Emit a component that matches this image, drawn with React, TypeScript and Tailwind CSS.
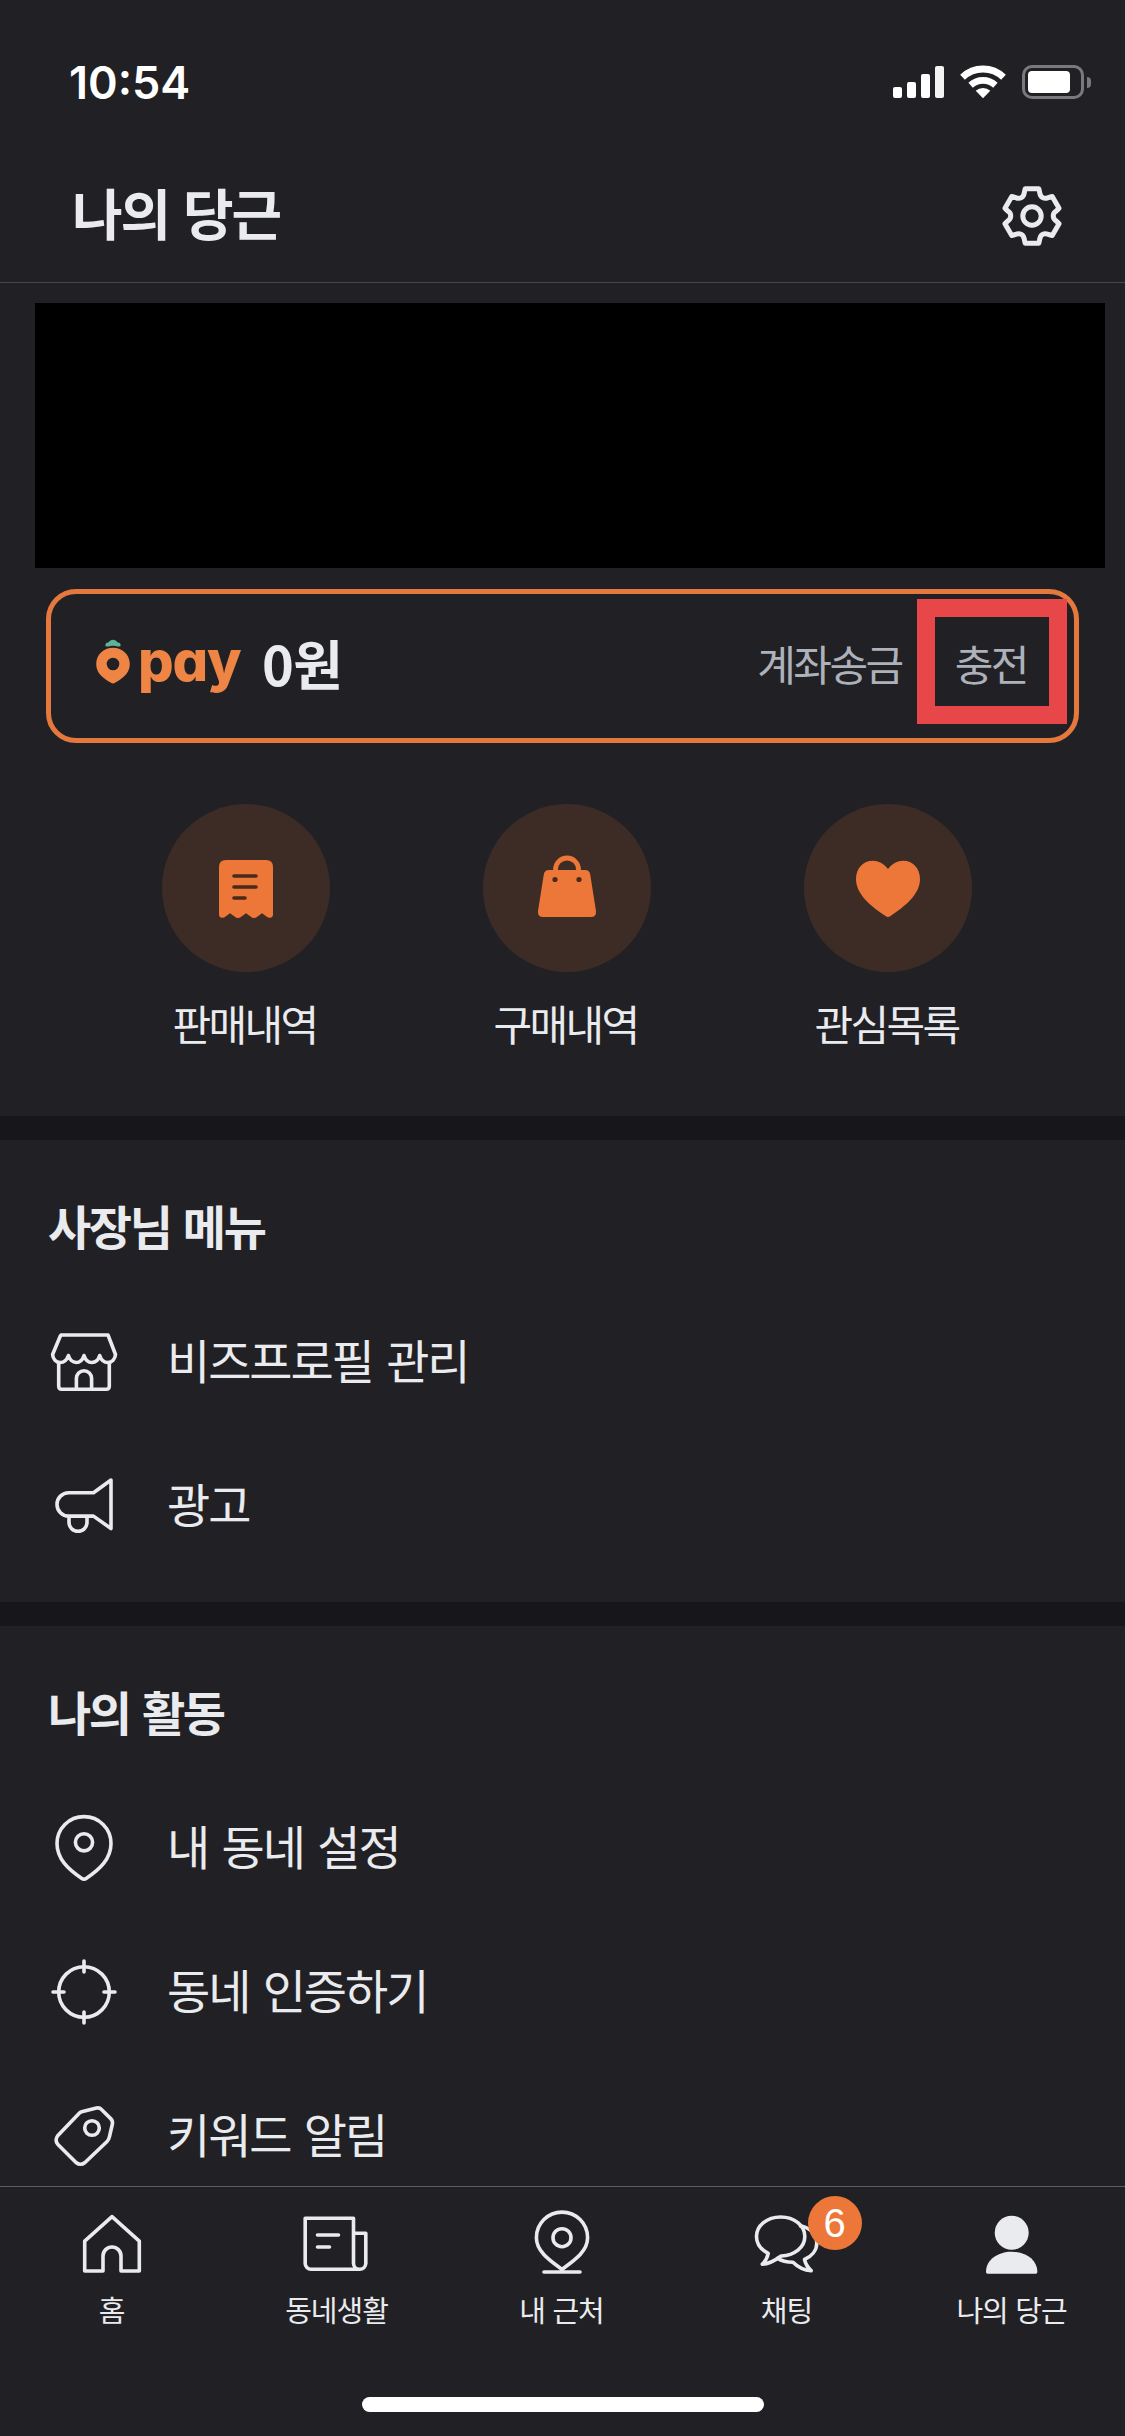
import type { ReactNode } from "react";

const GEAR_SECTOR = [
  [-9.6, -19, -8.2, -20.4, -7.9, -22.6],
  [-7.9, -22.6, -7.2, -26, -6.8, -27.3],
  [-6.8, -27.3, 6.8, -27.3, 6.8, -27.3],
  [6.8, -27.3, 7.2, -26, 7.9, -22.6],
  [8.2, -20.4, 9.6, -19, 10.65, -18.4],
];

function gearPath() {
  let d = "M-10.65 -18.4";
  for (let i = 0; i < 6; i++) {
    const a = (i * Math.PI) / 3;
    for (const seg of GEAR_SECTOR) {
      const pts: string[] = [];
      for (let k = 0; k < 6; k += 2) {
        const x = seg[k] * Math.cos(a) - seg[k + 1] * Math.sin(a);
        const y = seg[k] * Math.sin(a) + seg[k + 1] * Math.cos(a);
        pts.push(`${x.toFixed(2)} ${y.toFixed(2)}`);
      }
      d += ` C${pts.join(" ")}`;
    }
  }
  return d + "Z";
}

function Icon({ children, width = 3.6 }: { children: ReactNode; width?: number }) {
  return (
    <svg
      viewBox="0 0 72 72"
      className="size-[72px] shrink-0 overflow-visible"
      fill="none"
      stroke="#eaebee"
      strokeWidth={width}
      strokeLinecap="round"
      strokeLinejoin="round"
    >
      {children}
    </svg>
  );
}

function StatusBar() {
  return (
    <div className="flex h-[132px] items-start justify-between pt-[65px] pr-[34px] pl-[69px]">
      <span className="font-['Inter'] text-[45px] leading-[35px] font-semibold text-white">10:54</span>
      <div className="flex items-start">
        <div className="flex h-[33px] items-end gap-[5px]">
          <i className="h-[11px] w-[9px] rounded-[2px] bg-white" />
          <i className="h-[16px] w-[9px] rounded-[2px] bg-white" />
          <i className="h-[24px] w-[9px] rounded-[2px] bg-white" />
          <i className="h-[32px] w-[9px] rounded-[2px] bg-white/95" />
        </div>
        <svg viewBox="0 0 46 34" className="ml-[16px] h-[34px] w-[46px]" fill="none" stroke="#fff">
          <path d="M2.5 12.3A29.5 29.5 0 0 1 43.5 12.3" strokeWidth="6.8" />
          <path d="M10.6 20.2A18.4 18.4 0 0 1 35.4 20.2" strokeWidth="6.6" />
          <path d="M15.7 25.7A11 11 0 0 1 30.3 25.7L23 33.2Z" fill="#fff" stroke="none" />
        </svg>
        <div className="ml-[16px] flex items-center">
          <div className="h-[34px] w-[62px] rounded-[10px] border-[3px] border-[#7a7a7e] p-[3px]">
            <div className="h-[22px] w-[42px] rounded-[4px] bg-white" />
          </div>
          <div className="ml-[3px] h-[11px] w-[4px] rounded-r-full bg-[#7a7a7e]" />
        </div>
      </div>
    </div>
  );
}

function Header() {
  return (
    <header className="flex h-[151px] items-center justify-between border-b border-[#46464b] pr-[57px] pb-[1px] pl-[72px]">
      <h1 className="mt-[9px] text-[55px] leading-[72px] font-bold tracking-[-2.2px] [word-spacing:4px]">나의 당근</h1>
      <div className="mt-[18px]">
        <Icon width={5}>
          <g transform="translate(36 36)">
            <path d={gearPath()} />
            <circle r="9.2" />
          </g>
        </Icon>
      </div>
    </header>
  );
}

function PayCard() {
  return (
    <div className="relative mt-[21px] mr-[46px] ml-[46px] flex h-[154px] items-center rounded-[30px] border-[5px] border-[#e5783d] pr-[47px] pb-[6px] pl-[45px]">
      <svg viewBox="0 0 34 46" className="mb-[2px] h-[46px] w-[34px] shrink-0" fill="none">
        <path
          d="M9.500 7.200V5.300Q9.700 3.600 12 3.400Q13 3.200 13.500 2.200Q14.500 .7 17 .7T20.500 2.200Q21 3.200 22 3.400Q24.300 3.600 24.500 5.300V7.200Q21 7.800 19.500 7.100Q17 6.500 14.500 7.100Q13 7.800 9.500 7.200Z"
          fill="#5bb39a"
        />
        <path
          d="M17 8.700C7.500 8.700 .2 15.800 .2 25C.2 35 8 39.500 15 43.800Q17 45.100 19 43.800C26 39.500 33.800 35 33.800 25C33.800 15.800 26.500 8.700 17 8.700ZM17 18.700A6.300 6.300 0 1 1 17 31.300A6.300 6.300 0 1 1 17 18.700Z"
          fill="#ee8544"
          fillRule="evenodd"
        />
      </svg>
      <span className="mb-[4px] ml-[8px] w-[104px] font-['Inter'] text-[56px] leading-[60px] font-extrabold tracking-[-1.2px] text-[#ee8544] [font-feature-settings:'cv11']">
        pay
      </span>
      <span className="ml-[20px] text-[54px] leading-[60px] font-bold tracking-[-0.6px]">0원</span>
      <span className="ml-auto text-[42px] leading-[60px] tracking-[-2.5px] text-[#adb1ba]">계좌송금</span>
      <span className="ml-[53px] text-[42px] leading-[60px] tracking-[-2.5px] text-[#adb1ba]">충전</span>
      <div className="absolute top-[5px] right-[7px] h-[125px] w-[150px] border-[18px] border-[#e8474a]" />
    </div>
  );
}

function Shortcut({ label, children }: { label: string; children: ReactNode }) {
  return (
    <div className="flex w-[321px] flex-col items-center">
      <div className="flex size-[168px] items-center justify-center rounded-full bg-[#3d2c25]">
        <svg viewBox="0 0 72 72" className="size-[72px]" fill="#ed7738">
          {children}
        </svg>
      </div>
      <span className="mt-[21px] mr-[2px] text-[42px] leading-[60px] tracking-[-2.6px]">{label}</span>
    </div>
  );
}

function Shortcuts() {
  return (
    <div className="mt-[61px] ml-[85px] flex">
      <Shortcut label="판매내역">
        <path d="M16 8H56Q63 8 63 15V62.500Q63 65.500 60 65.800Q58 66 56.500 64.500L52 61.200L47.500 64.500Q44 67.500 40.500 64.500L36 61.200L31.500 64.500Q28 67.500 24.500 64.500L20 61.200L15.500 64.500Q14 66 12 65.800Q9 65.500 9 62.500V15Q9 8 16 8Z" />
        <path d="M24 24H46M24 35H46M24 46H35" stroke="#4a2a1a" strokeWidth="3.600" strokeLinecap="round" />
      </Shortcut>
      <Shortcut label="구매내역">
        <path d="M24.500 21V17.500A11.500 11.500 0 0 1 47.500 17.500V21" fill="none" stroke="#ed7738" strokeWidth="4.800" />
        <path d="M18 18H54Q58.600 18 59.200 22.500L65 59Q65.500 65 60 65H12Q6.500 65 7 59L12.800 22.500Q13.400 18 18 18Z" />
        <circle cx="24" cy="27.500" r="2.600" fill="#4a2a1a" />
        <circle cx="48" cy="27.500" r="2.600" fill="#4a2a1a" />
      </Shortcut>
      <Shortcut label="관심목록">
        <path d="M36 17C31.500 11.500 26.500 8.800 21 8.800C11 8.800 4 16.500 4 27C4 42 18 53.500 33.500 64Q36 65.800 38.500 64C54 53.500 68 42 68 27C68 16.500 61 8.800 51 8.800C45.500 8.800 40.500 11.500 36 17Z" />
      </Shortcut>
    </div>
  );
}

function Section({ title, children }: { title: string; children: ReactNode }) {
  return (
    <section className="border-t-[24px] border-[#17171b] pb-[24px]">
      <h2 className="flex h-[150px] items-center pt-[19px] pl-[48px] text-[47px] leading-none font-bold tracking-[-2.4px] [word-spacing:4px]">
        {title}
      </h2>
      {children}
    </section>
  );
}

function Row({ label, children }: { label: string; children: ReactNode }) {
  return (
    <div className="flex h-[144px] items-center pl-[48px]">
      <Icon>{children}</Icon>
      <span className="mb-[6px] ml-[47px] text-[47px] leading-[60px] tracking-[-2.1px] [word-spacing:5px]">{label}</span>
    </div>
  );
}

function Tab({ label, children, badge }: { label: string; children: ReactNode; badge?: string }) {
  return (
    <div className="flex w-[225px] flex-col items-center pt-[21px]">
      <div className="relative">
        {children}
        {badge && (
          <span className="absolute top-[-12px] left-[57px] flex size-[54px] items-center justify-center rounded-full bg-[#ed7738] font-['Liberation_Sans'] text-[40px] leading-none text-white">
            {badge}
          </span>
        )}
      </div>
      <span className="mt-[9px] text-[29px] leading-[40px] tracking-[-1px] [word-spacing:2px]">{label}</span>
    </div>
  );
}

function TabBar() {
  return (
    <nav className="flex h-[250px] shrink-0 flex-col border-t border-[#5c5c61]">
      <div className="-ml-px flex">
        <Tab label="홈">
          <Icon>
            <path d="M36 8.700L8.700 33.200V63H27V48A9 9 0 0 1 45 48V63H63.300V33.200Z" />
          </Icon>
        </Tab>
        <Tab label="동네생활">
          <Icon>
            <path d="M4.200 10.300H52.500V55.500A6 6 0 0 0 58.600 61.300H10A5.800 5.800 0 0 1 4.200 55.500ZM52.500 25.300H64.800V55.500A6.100 6.100 0 0 1 58.600 61.300" />
            <path d="M16.500 27H37.500M16.500 39H28.500" />
          </Icon>
        </Tab>
        <Tab label="내 근처">
          <Icon>
            <path d="M36 61.300C24 52.500 10.400 43.500 10.400 29.700A25.600 25.600 0 0 1 61.600 29.700C61.600 43.500 48 52.500 36 61.300ZM18 64H54" />
            <circle cx="36" cy="29.700" r="9" />
          </Icon>
        </Tab>
        <Tab label="채팅" badge="6">
          <Icon>
            <path d="M17.200 45.300C9.800 41.500 5.500 35.500 5.500 28.500C5.500 17.500 16 9 29.700 9S53.800 17.500 53.800 28.500S43.500 47.500 30.200 48C25.500 51.500 19.500 56 11.200 56.300C14 53.500 16.500 49.800 17.200 45.300Z" />
            <path d="M49.500 18C58.500 19.500 65.800 26 65.800 35C65.800 42.500 60.500 48.500 53.500 51.500C54.500 56 57 59.800 60.200 62.700C52.500 62.300 46.500 58.800 42 54.300C36 54.300 30.500 53 26.500 50.300" />
          </Icon>
        </Tab>
        <Tab label="나의 당근">
          <svg viewBox="0 0 72 72" className="size-[72px]" fill="#eaebee">
            <circle cx="35.700" cy="24.700" r="17" />
            <path d="M35.700 43.700C49.500 43.700 61.400 51.500 61.400 64Q61.400 65.700 59.700 65.700H11.700Q10 65.700 10 64C10 51.500 21.900 43.700 35.700 43.700Z" />
          </svg>
        </Tab>
      </div>
      <div className="mt-auto mb-[24px] ml-[362px] h-[15px] w-[402px] rounded-full bg-white" />
    </nav>
  );
}

export default function App() {
  return (
    <div className="flex h-[2436px] w-[1125px] flex-col overflow-hidden bg-[#212125] font-['Noto_Sans_CJK_KR',sans-serif] text-[#eaebee]">
      <StatusBar />
      <Header />
      <main className="flex-1 overflow-hidden">
        <div className="h-[833px] pt-[20px]">
          <div className="ml-[35px] h-[265px] w-[1070px] bg-black" />
          <PayCard />
          <Shortcuts />
        </div>
        <Section title="사장님 메뉴">
          <Row label="비즈프로필 관리">
            <path d="M13 9H60L67.500 28.500C67 33 64 36.500 59.800 36.500C56 36.500 53 33.500 51.700 29.500C50.500 33.500 47.500 36.500 43.800 36.500S37.300 33.500 36 29.500C34.700 33.500 32 36.500 28.300 36.500S21.500 33.500 20.400 29.500C19 33.500 16 36.500 12.300 36.500C8 36.500 5 33 4.600 28.500L12.300 10Z" />
            <path d="M10.700 37V60.300Q10.700 63.300 13.700 63.300H58.300Q61.300 63.300 61.300 60.300V37M28.400 63V52.300A7.600 7.600 0 0 1 43.600 52.300V63" />
          </Row>
          <Row label="광고">
            <path d="M63 10L45.500 22.700H20.700A11.700 11.700 0 0 0 20.700 46.100H45.500L63 58.500ZM21 46.500V52.300A9 9 0 0 0 39 52.300V46.500" />
          </Row>
        </Section>
        <Section title="나의 활동">
          <Row label="내 동네 설정">
            <path d="M36 4.600C21 4.600 9 16.500 9 31.500C9 47 20.500 57.500 33.500 66.200Q36 67.900 38.500 66.200C51.500 57.500 63 47 63 31.500C63 16.500 51 4.600 36 4.600Z" />
            <circle cx="36" cy="30.300" r="8.600" />
          </Row>
          <Row label="동네 인증하기">
            <circle cx="36" cy="36" r="25.300" />
            <path d="M36 5V16M36 56V67M5 36H16M56 36H67" />
          </Row>
          <Row label="키워드 알림">
            <path d="M33.700 11.800L48.500 8Q51.500 7.300 53.500 9.500L62.700 18.600Q65 20.800 64.400 24L61.500 36.500Q61 39.500 58.800 41.700L37 62.500Q32.500 66 28 62.500L9.700 44.300Q6.500 40 9.700 35.700L31 13.500Q32.200 12.200 33.700 11.800Z" />
            <circle cx="44" cy="28" r="7.300" />
          </Row>
        </Section>
      </main>
      <TabBar />
    </div>
  );
}
